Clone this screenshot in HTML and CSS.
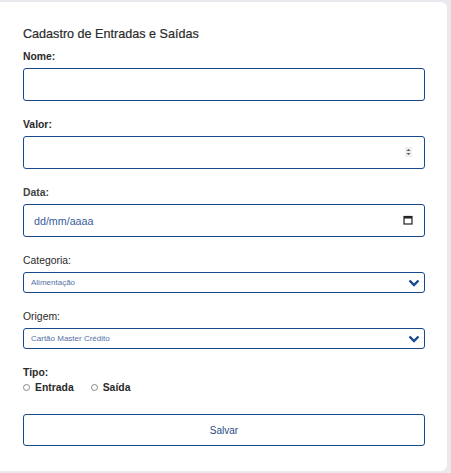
FILE: index.html
```html
<!DOCTYPE html>
<html lang="pt-BR">
<head>
<meta charset="utf-8">
<link rel="stylesheet" href="styles.css">
</head>
<body>
<form class="card">
  <h2 class="title">Cadastro de Entradas e Saídas</h2>

  <div class="field">
    <label class="label bold" for="nome">Nome:</label>
    <input class="input" id="nome" type="text">
  </div>

  <div class="field">
    <label class="label bold" for="valor">Valor:</label>
    <div class="wrap">
      <input class="input" id="valor" type="text">
      <span class="spin"><svg width="7" height="10" viewBox="0 0 7 10"><path d="M1.5 4 L3.5 2 L5.5 4 Z M1.5 6 L3.5 8 L5.5 6 Z" fill="#555"/></svg></span>
    </div>
  </div>

  <div class="field">
    <label class="label semi" for="data">Data:</label>
    <div class="wrap">
      <input class="input date" id="data" type="text" placeholder="dd/mm/aaaa">
      <svg class="cal" width="10" height="10" viewBox="0 0 10 10"><rect x="1" y="1.5" width="8" height="7.5" fill="none" stroke="#222" stroke-width="1.2"/><rect x="1" y="1.5" width="8" height="2" fill="#222"/></svg>
    </div>
  </div>

  <div class="field">
    <label class="label" for="cat">Categoria:</label>
    <div class="wrap">
      <select class="select" id="cat"><option>Alimentação</option></select>
      <svg class="chev" width="12" height="8" viewBox="0 0 12 8"><path d="M1.5 1.5 L6 6 L10.5 1.5" fill="none" stroke="#174a8b" stroke-width="2.4"/></svg>
    </div>
  </div>

  <div class="field">
    <label class="label" for="orig">Origem:</label>
    <div class="wrap">
      <select class="select" id="orig"><option>Cartão Master Crédito</option></select>
      <svg class="chev" width="12" height="8" viewBox="0 0 12 8"><path d="M1.5 1.5 L6 6 L10.5 1.5" fill="none" stroke="#174a8b" stroke-width="2.4"/></svg>
    </div>
  </div>

  <div class="field">
    <span class="label bold">Tipo:</span>
    <div class="radios">
      <label class="radio"><input type="radio" name="tipo"><span>Entrada</span></label>
      <label class="radio"><input type="radio" name="tipo"><span>Saída</span></label>
    </div>
  </div>

  <button class="btn" type="button">Salvar</button>
</form>
</body>
</html>
```

FILE: styles.css
```css
html, body {
  margin: 0;
  padding: 0;
}
body {
  background: #e9e9ee;
  width: 451px;
  height: 473px;
  overflow: hidden;
  font-family: "Liberation Sans", Arial, sans-serif;
}
.card {
  box-sizing: border-box;
  margin: 2px 0 0 0;
  width: 447px;
  height: 469px;
  background: #fff;
  border-radius: 0 6px 6px 0;
  padding: 23px 22px 0 23px;
}
.title {
  margin: 0 0 7px 0;
  font-size: 12.6px;
  line-height: 18px;
  font-weight: normal;
  color: #2b2b2b;
  -webkit-text-stroke: 0.2px #2b2b2b;
}
.field {
  margin-bottom: 17px;
}
.label {
  display: block;
  font-size: 10.4px;
  line-height: 13px;
  color: #2a2a2a;
  margin-bottom: 5px;
}
.bold { font-weight: bold; }
.semi { font-weight: bold; color: #444; }
.wrap {
  position: relative;
}
.input {
  box-sizing: border-box;
  display: block;
  width: 402px;
  height: 33px;
  margin: 0;
  border: 1.5px solid #174a8b;
  border-radius: 3px;
  background: #fff;
  padding: 0 10px;
  font-family: "Liberation Sans", Arial, sans-serif;
  font-size: 10.7px;
  outline: none;
}
.date::placeholder {
  color: #3a5d9c;
}
.spin {
  position: absolute;
  right: 13px;
  top: 11px;
  width: 7px;
  height: 10px;
  background: #eee;
  display: flex;
}
.cal {
  position: absolute;
  right: 12px;
  top: 11px;
}
.select {
  box-sizing: border-box;
  display: block;
  width: 402px;
  height: 21px;
  margin: 0;
  border: 1.5px solid #174a8b;
  border-radius: 3px;
  background: #fff;
  padding: 0 7px;
  font-family: "Liberation Sans", Arial, sans-serif;
  font-size: 8px;
  color: #5570a8;
  appearance: none;
  -webkit-appearance: none;
  outline: none;
}
.chev {
  position: absolute;
  right: 5px;
  top: 7px;
}
.radios {
  display: flex;
  gap: 17px;
  margin-top: -2px;
}
.radio {
  display: flex;
  align-items: center;
  gap: 5px;
  font-size: 10.4px;
  font-weight: bold;
  color: #2a2a2a;
}
.radio input {
  appearance: none;
  -webkit-appearance: none;
  margin: 0;
  width: 7px;
  height: 7px;
  border: 1px solid #888;
  border-radius: 50%;
  box-sizing: border-box;
}
.btn {
  box-sizing: border-box;
  display: block;
  width: 402px;
  height: 32px;
  margin-top: 21px;
  border: 1.5px solid #174a8b;
  border-radius: 3px;
  background: #fff;
  font-family: "Liberation Sans", Arial, sans-serif;
  font-size: 10px;
  color: #2b4b85;
  cursor: pointer;
}
.field:nth-last-of-type(1) {
  margin-bottom: 16px;
}
```
